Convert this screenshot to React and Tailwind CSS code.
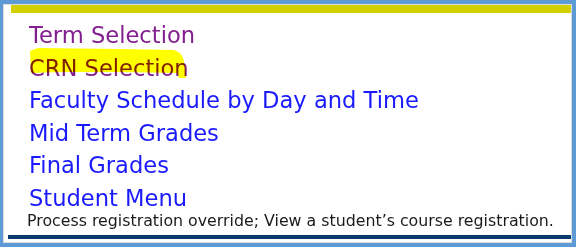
import React from 'react';

const LINKS = [
  { label: 'Term Selection', visited: true },
  { label: 'CRN Selection', visited: true },
  { label: 'Faculty Schedule by Day and Time' },
  { label: 'Mid Term Grades' },
  { label: 'Final Grades' },
  { label: 'Student Menu' },
];

function Highlight() {
  // marker stroke drawn over "CRN Selection"
  return (
    <svg
      className="absolute left-0 top-0 pointer-events-none mix-blend-multiply"
      width="576"
      height="247"
      viewBox="0 0 576 247"
    >
      <path
        d="M30 51 L38 48 L120 49 L174 50 L180 53 L183 58 L185 66 L186 78 L179 78 L177 73 L120 72 L62 72 L31 73 Z"
        fill="#ffff00"
      />
    </svg>
  );
}

export default function App() {
  return (
    <div className="relative w-[576px] h-[247px] bg-white font-['DejaVu_Sans',Verdana,sans-serif]">
      <div className="w-full h-full border-[4px] border-l-[3px] border-[#5e9bd6]">
        <div className="h-full border border-[#dcdcdc] flex flex-col">
          <div className="ml-[7px] h-[8px] bg-[#d3d000]" />

          <ul className="pl-[25px] pt-[6px]">
            {LINKS.map((link) => (
              <li key={link.label}>
                <a
                  href="#"
                  className={`text-[22.6px] leading-[32.6px] ${link.visited ? 'text-[#82208f]' : 'text-[#1a1aff]'}`}
                >
                  {link.label}
                </a>
              </li>
            ))}
          </ul>
          <p className="pl-[23px] text-[15.8px] leading-[12px] text-[#1a1a1a] whitespace-nowrap">
            Process registration override; View a student’s course registration.
          </p>

          <div className="ml-[4px] mt-[8px] h-[4px] bg-[#0b3a6e]" />
        </div>
      </div>
      <Highlight />
    </div>
  );
}
